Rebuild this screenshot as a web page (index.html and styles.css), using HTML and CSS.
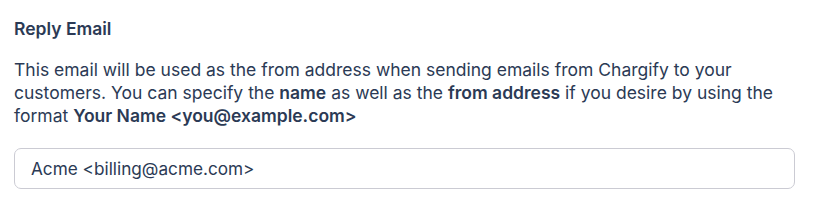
FILE: index.html
```html
<!DOCTYPE html>
<html>
<head>
  <meta charset="UTF-8" />
  <title>Reply Email</title>
  <link rel="stylesheet" href="styles.css">
</head>
<body>
  <div class="field">
    <label class="field-label" for="replyEmail">Reply Email</label>
    <p class="field-help">
      This email will be used as the from address when sending emails from Chargify to your
      customers. You can specify the <strong>name</strong> as well as the <strong>from address</strong> if you desire by using the
      format <strong>Your Name &lt;you@example.com&gt;</strong>
    </p>
    <input type="text" id="replyEmail" class="field-input" value="Acme <billing@acme.com>" />
  </div>
</body>
</html>
```

FILE: styles.css
```css
body {
  font-family: Inter, "Noto Sans", sans-serif;
  margin: 0;
  padding: 0;
  background: #ffffff;
  color: #2b3a55;
}
.field {
  padding: 19px 22px 0 14px;
}
.field-label {
  display: block;
  font-size: 17.5px;
  font-weight: 600;
  line-height: 20px;
  color: #2b3a55;
}
.field-help {
  margin: 19px 0 0;
  font-size: 17.5px;
  line-height: 23px;
}
.field-help strong {
  font-weight: 600;
}
.field-input {
  display: block;
  box-sizing: border-box;
  width: 100%;
  height: 41px;
  margin-top: 21px;
  padding: 0 16px;
  font-family: Inter, "Noto Sans", sans-serif;
  font-size: 17.2px;
  color: #2b3a55;
  border: 1px solid #cbcbd3;
  border-radius: 7px;
  background: #ffffff;
  outline: none;
}
```
